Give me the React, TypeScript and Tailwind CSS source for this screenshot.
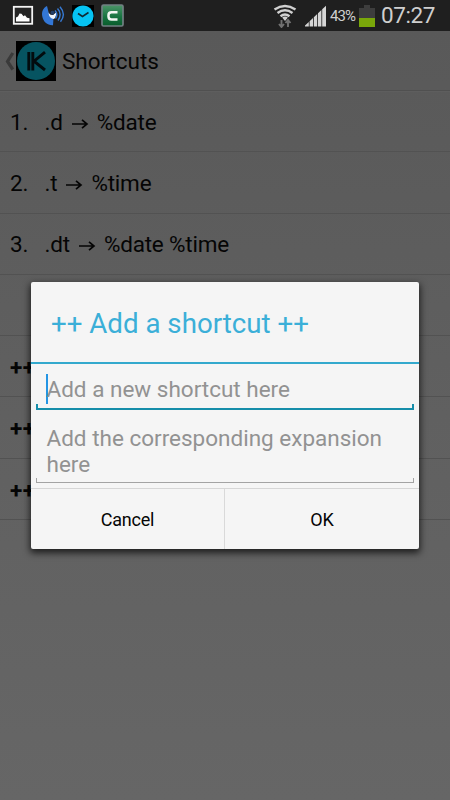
import React from 'react';

const rows = [
  { n: '1.', key: '.d', value: '%date' },
  { n: '2.', key: '.t', value: '%time' },
  { n: '3.', key: '.dt', value: '%date %time' },
];

function StatusBar() {
  return (
    <header className="flex h-[31px] items-center bg-[#1f1f1f] text-[#cfcfcf]">
      <svg className="ml-[12px] h-[21px] w-[22px] shrink-0" viewBox="0 0 22 21">
        <rect x="1.8" y="1.8" width="18.4" height="17" fill="#252525" stroke="#f4f4f4" strokeWidth="1.8" />
        <path d="M4 16.500v-4l2-1 1.500-3 2 .2 2 2.500 1.500-1 2 2.500 2.500.6v3.200z" fill="#fff" />
      </svg>
      <svg className="ml-[7px] h-[22px] w-[24px] shrink-0" viewBox="0 0 24 22">
        <path d="M6 1C2 3 .5 7 1.200 11c1 6 5.300 9.500 10.800 9.200L12.500 13 8 9z" fill="#3377d6" />
        <path d="M7.500 7.500q1.500 3 4.500 2.500l3-2.500q.5 4-2 6.500-5 0-5.500-6.500z" fill="#f2f6fb" />
        <circle cx="11.500" cy="7.800" r="2" fill="#243f68" />
        <path d="M14 5.500q3.500 3.500.5 8M16.500 3.500q5 5.500.5 12M19 1.800q6.500 7.500.5 15" fill="none" stroke="#3679d2" strokeWidth="1.400" />
      </svg>
      <svg className="ml-[7px] h-[22px] w-[22px] shrink-0" viewBox="0 0 22 22">
        <path d="M0 0h22v22H0z" fill="#000" />
        <circle cx="11" cy="11" r="10.600" fill="#06c4f4" />
        <path d="M6 8.500l4.500 3 6-4" fill="none" stroke="#102b35" strokeWidth="1.600" />
      </svg>
      <svg className="ml-[7px] h-[23px] w-[23px] shrink-0" viewBox="0 0 23 23">
        <defs>
          <linearGradient id="greenTile" x2="0" y2="1"><stop stopColor="#4d9569" /><stop offset=".55" stopColor="#187541" /><stop offset="1" stopColor="#095b2b" /></linearGradient>
        </defs>
        <rect x="1" y="1" width="21" height="21" rx="1.500" fill="url(#greenTile)" stroke="#718083" strokeWidth="1.700" />
        <path d="M16.500 8.200H10.500Q7.500 8.200 7.500 11v1.500Q7.500 15.500 10.500 15.500h6" fill="none" stroke="#f2f6f2" strokeWidth="2.500" />
      </svg>
      <svg className="ml-[149px] h-[25px] w-[24px] shrink-0" viewBox="0 0 24 25">
        <path d="M1.500 6.500q10.500-7 21 0M4.500 10q7.500-5.500 15 0M7.500 13.300q4.500-3.600 9 0" fill="none" stroke="#d0d0d0" strokeWidth="2.400" />
        <path d="M9.200 14.500q2.800-1.800 5.600 0L12 18z" fill="#d0d0d0" />
        <path d="M8.500 17v7M6 21l2.500 3 2.500-3M15 24v-7M12.500 20l2.500-3 2.500 3" fill="none" stroke="#727272" strokeWidth="1.900" />
      </svg>
      <svg className="ml-[8px] h-[22px] w-[22px] shrink-0" viewBox="0 0 22 22">
        <path d="M0 21.500v-1l3.800-3.500v4.500zM4.600 21.500v-5.200l3.400-3.300v8.500zM8.800 21.500v-9.300l3.400-3.200v12.500zM13 21.500V8.200l3.400-3.200v16.500zM17.200 21.500V4.200L21 .8v20.700z" fill="#d5d5d5" />
      </svg>
      <span className="ml-[3px] mt-[2px] w-[27px] whitespace-nowrap text-[15px] leading-none tracking-[-0.9px]">43%</span>
      <svg className="ml-[2px] h-[22px] w-[16px] shrink-0" viewBox="0 0 16 22">
        <path d="M0 3h5V0h6v3h5v19H0z" fill="#3d3d3d" />
        <path d="M0 13h16v9H0z" fill="#79a70a" />
      </svg>
      <time className="ml-[6px] whitespace-nowrap text-[22.5px] leading-none tracking-[-0.4px]">07:27</time>
    </header>
  );
}

function Shortcuts() {
  return (
    <main className="flex h-[769px] flex-col bg-linear-to-b from-[#595959] via-[#606060] to-[#666666]">
      <div className="flex h-[60px] items-center border-b border-[#505050] shadow-[0_1px_0_#5e5e5e]">
        <svg className="ml-[5px] h-[20px] w-[10px]" viewBox="0 0 10 20">
          <path d="M7.800 2L2.500 10.500l5.300 8" fill="none" stroke="#3a3a3a" strokeWidth="3.200" />
        </svg>
        <svg className="ml-px h-[40px] w-[40px]" viewBox="0 0 40 40">
          <path d="M0 0h40v40H0z" fill="#000" />
          <circle cx="20" cy="20" r="19" fill="#065461" />
          <path d="M12.800 11v18.500M16.800 11v18.500M29 11.200L18 20.200 29 29" fill="none" stroke="#020b0e" strokeWidth="2.900" />
        </svg>
        <h1 className="ml-[6px] pt-[3px] text-[22.5px] tracking-[-0.05px]">Shortcuts</h1>
      </div>
      {rows.map((row) => (
        <div key={row.n} className="flex h-[61.3px] items-center border-b border-[#525252] pl-[10px] pt-[3px] text-[22.5px] tracking-[-0.2px]">
          <span className="w-[34.5px]">{row.n}</span>
          <span>{row.key}</span>
          <svg className="mx-[8px] mt-[2px] h-[12px] w-[18px]" viewBox="0 0 18 12">
            <path d="M1 6h15M11 1.800L16 6l-5 4.200" fill="none" stroke="#050505" strokeWidth="1.700" />
          </svg>
          <span>{row.value}</span>
        </div>
      ))}
      <div className="h-[61.3px] border-b border-[#525252]" />
      {[1, 2, 3].map((item) => (
        <div key={item} className="flex h-[61.3px] items-center border-b border-[#525252] pl-[10px] pt-[3px] text-[22.5px] font-bold tracking-[0.5px]">++</div>
      ))}
    </main>
  );
}

function AddDialog() {
  return (
    <section role="dialog" className="absolute left-[31px] top-[282px] h-[267px] w-[388px] overflow-hidden rounded-[2px] bg-[#f5f5f5] shadow-[0_3px_7px_1px_rgba(0,0,0,.7)]">
      <h2 className="flex h-[82px] items-center border-b-[2px] border-[#33a9cd] pl-[20px] pt-[3px] text-[27.7px] text-[#3bafd8]">++ Add a shortcut ++</h2>
      <div className="mx-[5px] flex h-[45px] flex-col text-[22.5px] text-[#929292]">
        <div className="flex h-[40px] items-center pl-[10px] pt-[9px]">
          <i className="h-[30px] w-[2px] shrink-0 bg-[#2495e4]" />
          <span className="ml-[-1.5px] whitespace-nowrap pt-[3px]">Add a new shortcut here</span>
        </div>
        <div className="mt-auto h-[6px] shrink-0 border-x-2 border-b-2 border-[#168eaa]" />
      </div>
      <div className="mx-[5px] mt-[16px] h-[58px] text-[22.5px] leading-[26px] text-[#929292]">
        <p className="h-[53px] whitespace-nowrap pl-[10.5px]">Add the corresponding expansion<br />here</p>
        <div className="h-[5px] border-x border-b border-[#a3a3a3]" />
      </div>
      <div className="mt-[5px] grid h-[61px] grid-cols-2 border-t border-[#d6d6d6] text-[18px] tracking-[-0.2px]">
        <button className="border-r border-[#d9d9d9] pt-px">Cancel</button>
        <button className="pt-px">OK</button>
      </div>
    </section>
  );
}

export default function App() {
  return (
    <div className="relative h-[800px] w-[450px] overflow-hidden font-['Roboto',sans-serif] text-[#050505]">
      <StatusBar />
      <Shortcuts />
      <AddDialog />
    </div>
  );
}
